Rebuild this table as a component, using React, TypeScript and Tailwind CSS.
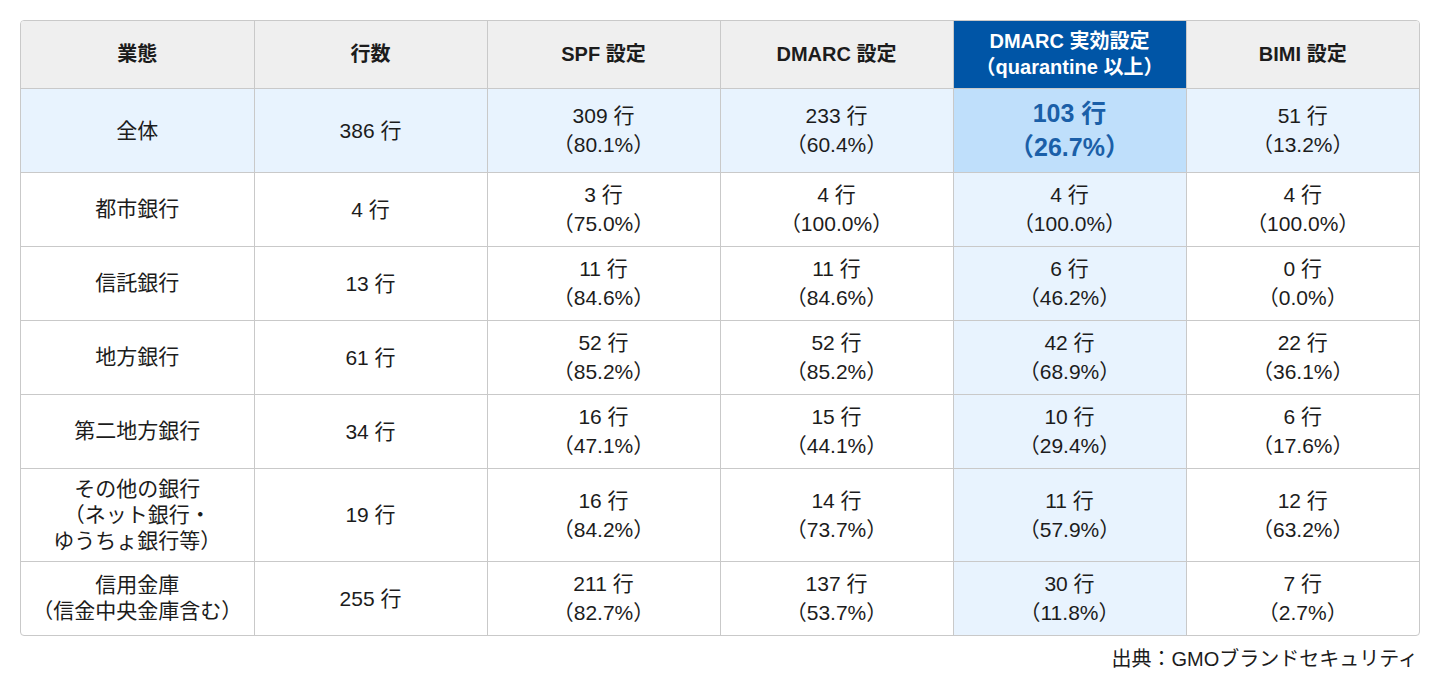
const headers = ['業態', '行数', 'SPF 設定', 'DMARC 設定', 'DMARC 実効設定\n（quarantine 以上）', 'BIMI 設定'];

type Row = { name: string; total: string; cells: [string, string][]; h: string };

const rows: Row[] = [
  { name: '都市銀行', total: '4 行', h: 'h-[74px]', cells: [['3 行', '（75.0%）'], ['4 行', '（100.0%）'], ['4 行', '（100.0%）'], ['4 行', '（100.0%）']] },
  { name: '信託銀行', total: '13 行', h: 'h-[74px]', cells: [['11 行', '（84.6%）'], ['11 行', '（84.6%）'], ['6 行', '（46.2%）'], ['0 行', '（0.0%）']] },
  { name: '地方銀行', total: '61 行', h: 'h-[74px]', cells: [['52 行', '（85.2%）'], ['52 行', '（85.2%）'], ['42 行', '（68.9%）'], ['22 行', '（36.1%）']] },
  { name: '第二地方銀行', total: '34 行', h: 'h-[74px]', cells: [['16 行', '（47.1%）'], ['15 行', '（44.1%）'], ['10 行', '（29.4%）'], ['6 行', '（17.6%）']] },
  { name: 'その他の銀行\n（ネット銀行・\nゆうちょ銀行等）', total: '19 行', h: 'h-[93px]', cells: [['16 行', '（84.2%）'], ['14 行', '（73.7%）'], ['11 行', '（57.9%）'], ['12 行', '（63.2%）']] },
  { name: '信用金庫\n（信金中央金庫含む）', total: '255 行', h: 'h-[74px]', cells: [['211 行', '（82.7%）'], ['137 行', '（53.7%）'], ['30 行', '（11.8%）'], ['7 行', '（2.7%）']] },
];

const cell = 'border border-[#c9c9c9] text-center align-middle p-0';

const App = () => {
  return (
    <div className="w-[1440px] h-[690px] bg-white px-[20px] pt-[20px] text-[#1c1c1c] font-['Liberation_Sans','Noto_Sans_CJK_JP',sans-serif]">
      {/* Table */}
      <div className="w-[1400px] border border-[#c9c9c9] rounded-[4px] overflow-hidden">
        <table className="w-full table-fixed border-collapse border-hidden">
          <thead>
            <tr className="h-[67px] bg-[#efefef]">
              {headers.map((h, i) => (
                <th
                  key={i}
                  className={`${cell} text-[20px] leading-[26px] font-bold whitespace-pre-line ${i === 4 ? 'bg-[#0055a6] text-white' : ''}`}
                >
                  {h}
                </th>
              ))}
            </tr>
          </thead>
          <tbody className="text-[21px]">
            {/* Overall row */}
            <tr className="h-[84px] bg-[#e8f3fe]">
              <td className={`${cell} leading-[29px]`}>全体</td>
              <td className={`${cell} leading-[29px]`}>386 行</td>
              <td className={`${cell} leading-[29px]`}>309 行<br />（80.1%）</td>
              <td className={`${cell} leading-[29px]`}>233 行<br />（60.4%）</td>
              <td className={`${cell} bg-[#bfdffb] text-[#1b5fa8] font-bold text-[25px] leading-[34px]`}>103 行<br />（26.7%）</td>
              <td className={`${cell} leading-[29px]`}>51 行<br />（13.2%）</td>
            </tr>
            {rows.map((r) => (
              <tr key={r.name} className={r.h}>
                <td className={`${cell} leading-[26px] whitespace-pre-line`}>{r.name}</td>
                <td className={`${cell} leading-[29px]`}>{r.total}</td>
                {r.cells.map(([a, b], j) => (
                  <td key={j} className={`${cell} leading-[29px] ${j === 2 ? 'bg-[#e8f3fe]' : ''}`}>
                    {a}
                    <br />
                    {b}
                  </td>
                ))}
              </tr>
            ))}
          </tbody>
        </table>
      </div>

      {/* Source */}
      <div className="w-[1400px] flex justify-end pt-[9px] pr-[2px] text-[20px] leading-[28px]">出典：GMOブランドセキュリティ</div>
    </div>
  );
};

export default App;
